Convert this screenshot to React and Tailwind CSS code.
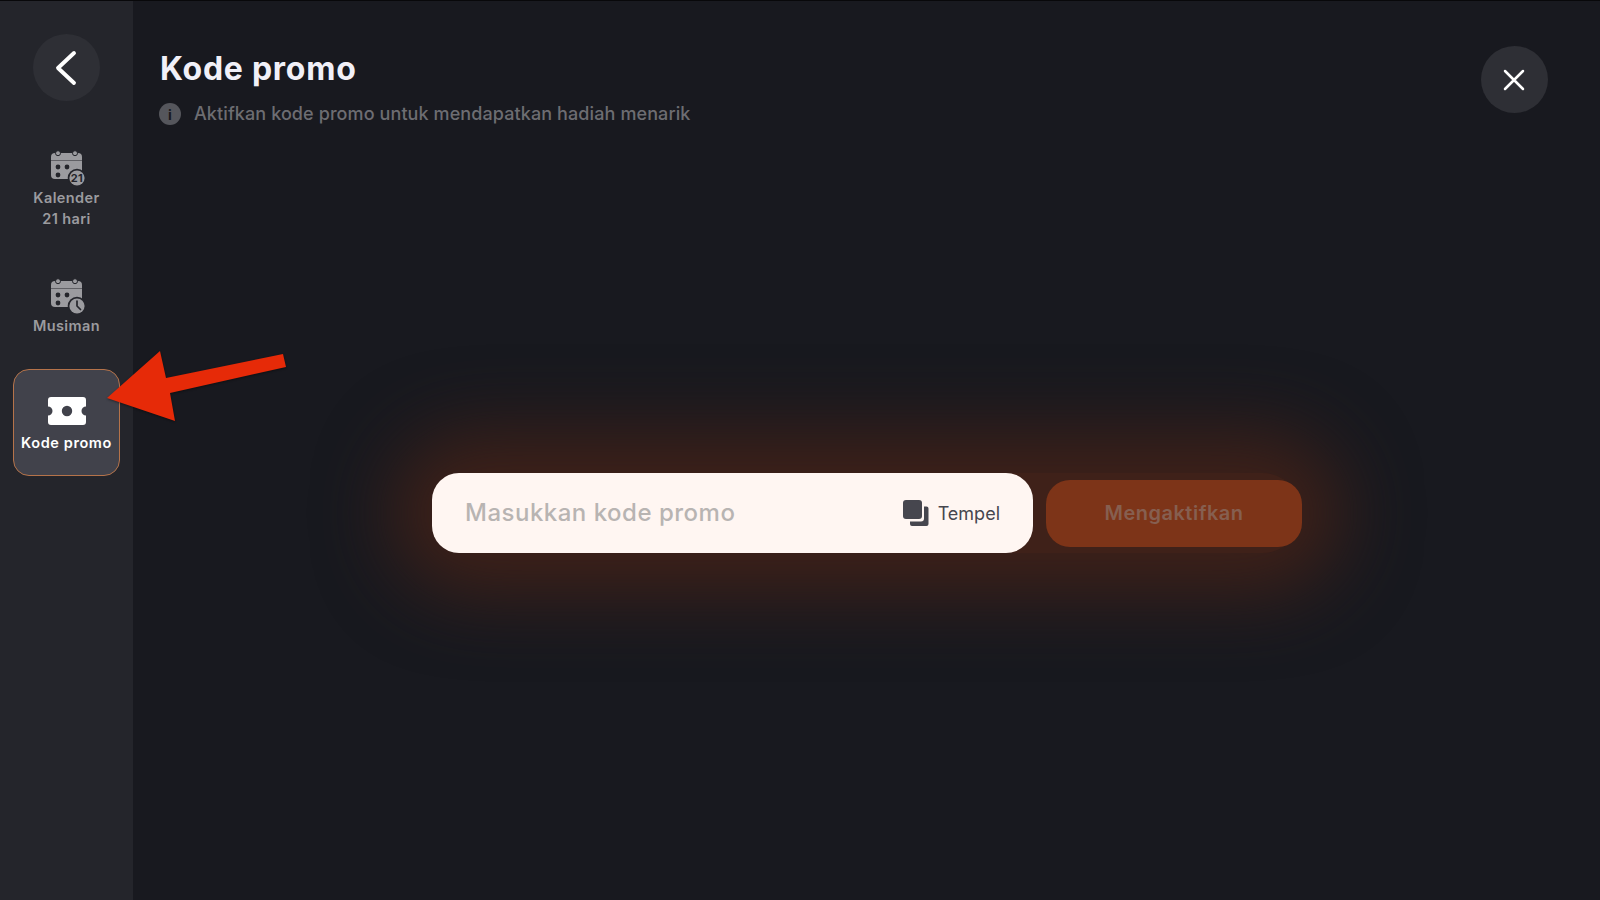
function CalendarBase() {
    return (
        <>
            <rect x="1" y="3" width="31" height="26" rx="4" fill="currentColor" />
            <path d="M1 10.500h31" stroke="#24252b" strokeWidth="0.5" />
            <circle cx="8" cy="3.200" r="2.500" fill="currentColor" stroke="#24252b" strokeWidth="1" />
            <circle cx="25" cy="3.200" r="2.500" fill="currentColor" stroke="#24252b" strokeWidth="1" />
            <circle cx="8" cy="17" r="2.400" fill="#24252b" />
            <circle cx="17" cy="17" r="2.400" fill="#24252b" />
            <circle cx="8" cy="25" r="2.400" fill="#24252b" />
            <circle cx="27" cy="28" r="9.300" fill="#24252b" />
            <circle cx="27" cy="28" r="7.600" fill="currentColor" />
        </>
    );
}

function CalendarNumber() {
    return (
        <svg className="ml-[5px] h-[36px] w-[38px] text-[#9b9b9f]" viewBox="0 0 38 36" fill="none">
            <CalendarBase />
            <text x="27" y="32" textAnchor="middle" fontSize="11" fontWeight="700" fontFamily="Inter, sans-serif" fill="#24252b">21</text>
        </svg>
    );
}

function CalendarClock() {
    return (
        <svg className="ml-[5px] h-[36px] w-[38px] text-[#9b9b9f]" viewBox="0 0 38 36" fill="none">
            <CalendarBase />
            <path d="M27 23v5l3.500 3.500" stroke="#24252b" strokeWidth="1.700" strokeLinecap="round" strokeLinejoin="round" />
        </svg>
    );
}

function TicketIcon() {
    return (
        <svg className="h-[28px] w-[38px]" viewBox="0 0 38 28" fill="none">
            <path fillRule="evenodd" d="M3 0h32a3 3 0 0 1 3 3v6.500a4.500 4.500 0 0 0 0 9V25a3 3 0 0 1-3 3H3a3 3 0 0 1-3-3v-6.500a4.500 4.500 0 0 0 0-9V3a3 3 0 0 1 3-3zm16 8.800a5.200 5.200 0 1 0 0 10.400 5.200 5.200 0 0 0 0-10.400z" fill="#ffffff" />
        </svg>
    );
}

function SideItem({ icon, children }) {
    return (
        <div className="flex flex-col items-center text-[14.500px] leading-[21px] font-semibold tracking-[0.4px] text-[#9b9b9f]">
            {icon}
            <div className="mt-[1px] text-center">{children}</div>
        </div>
    );
}

export default function App() {
    return (
        <div className="relative flex h-[900px] w-[1600px] overflow-hidden border-t border-[#08080a] bg-[#18191f] font-['Inter',sans-serif]">
            {/* Sidebar */}
            <aside className="flex w-[133px] shrink-0 flex-col items-center bg-[#24252b] pt-[33px]">
                <button className="flex h-[67px] w-[67px] items-center justify-center rounded-full bg-[#2e2f35]">
                    <svg className="mr-[2px] h-[36px] w-[24px]" viewBox="0 0 24 36" fill="none">
                        <path d="M20 3 4 18l16 15" stroke="#ffffff" strokeWidth="3.900" strokeLinecap="round" strokeLinejoin="round" />
                    </svg>
                </button>
                <div className="mt-[49px]">
                    <SideItem icon={<CalendarNumber />}>
                        Kalender
                        <br />
                        21 hari
                    </SideItem>
                </div>
                <div className="mt-[49px]">
                    <SideItem icon={<CalendarClock />}>Musiman</SideItem>
                </div>
                <div className="mt-[33px] flex h-[107px] w-[107px] flex-col items-center rounded-[16px] border border-[#b5734a] bg-[#41424b] pt-[27px]">
                    <TicketIcon />
                    <div className="mt-[7px] text-[14.500px] leading-[21px] font-semibold tracking-[0.6px] text-white">Kode promo</div>
                </div>
            </aside>

            {/* Konten */}
            <main className="flex min-w-0 flex-1 flex-col">
                <div className="flex items-start justify-between pr-[52px] pl-[27px]">
                    <div className="pt-[46px]">
                        <h1 className="text-[32px] leading-[44px] font-bold tracking-[0.75px] text-[#f1f0f8]">Kode promo</h1>
                        <div className="mt-[11px] -ml-[1px] flex items-center gap-[13px]">
                            <span className="flex h-[22px] w-[22px] items-center justify-center rounded-full bg-[#55565c] text-[14px] font-bold text-[#18191f]">i</span>
                            <span className="text-[18px] leading-[24px] font-medium tracking-[0.1px] text-[#6d6d72]">Aktifkan kode promo untuk mendapatkan hadiah menarik</span>
                        </div>
                    </div>
                    <button className="mt-[45px] flex h-[67px] w-[67px] items-center justify-center rounded-full bg-[#2e2f35]">
                        <svg className="mr-[1px] h-[24px] w-[24px]" viewBox="0 0 24 24" fill="none">
                            <path d="M3 3l18 18M21 3 3 21" stroke="#ffffff" strokeWidth="2.500" strokeLinecap="round" />
                        </svg>
                    </button>
                </div>

                <div className="mt-[347px] ml-[299px] flex w-[870px] items-center gap-[13px] rounded-[40px] bg-[#3f2119] shadow-[0_0_75px_40px_#3f2119]">
                    <div className="flex h-[80px] w-[601px] items-center justify-between rounded-[27px] bg-[#fff6f2] pr-[33px] pl-[33px]">
                        <span className="text-[24px] font-medium tracking-[0.5px] text-[#b8b4b2]">Masukkan kode promo</span>
                        <div className="flex items-center gap-[9px] text-[#46464e]">
                            <svg className="h-[26px] w-[26px]" viewBox="0 0 26 26" fill="currentColor">
                                <rect x="0" y="0" width="19" height="19" rx="3" />
                                <path d="M21 6.500h2.500a2 2 0 0 1 2 2V24a2 2 0 0 1-2 2H9a2 2 0 0 1-2-2v-2.500h11a3 3 0 0 0 3-3V6.500z" />
                            </svg>
                            <span className="text-[18px]">Tempel</span>
                        </div>
                    </div>
                    <button className="flex h-[67px] w-[256px] items-center justify-center rounded-[24px] bg-[#7d3418] text-[20px] font-semibold tracking-[0.5px] text-[#865f50]">Mengaktifkan</button>
                </div>
            </main>

            {/* Panah merah */}
            <svg className="absolute top-[344px] left-[100px] h-[85px] w-[195px] drop-shadow-[0_1px_1px_rgba(0,0,0,0.4)]" viewBox="100 345 195 85">
                <polygon points="107,398 160,351 166,378 283,354 286,367 170,393 175,421" fill="#e62a08" />
            </svg>
        </div>
    );
}
